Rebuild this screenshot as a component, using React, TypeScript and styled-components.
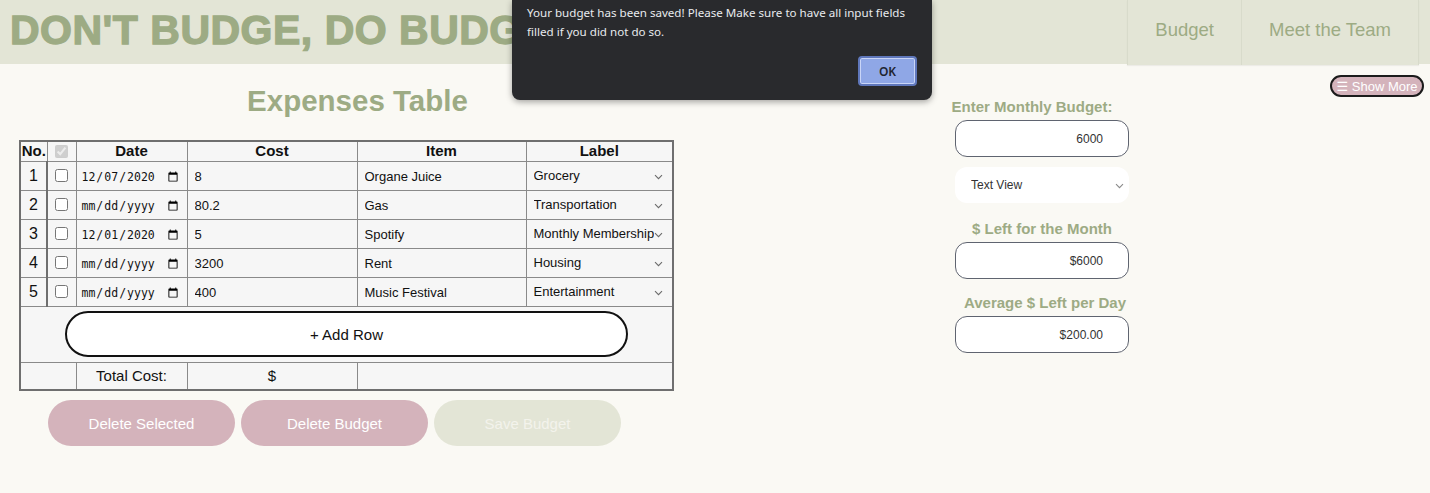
import React from "react";
import styled, { createGlobalStyle } from "styled-components";

const GlobalStyle = createGlobalStyle`
  html, body { margin: 0; padding: 0; background: #faf9f4; }
  body {
    font-family: "Liberation Sans", Arial, sans-serif;
    width: 1430px;
    height: 493px;
    overflow: hidden;
  }
  * { box-sizing: border-box; }
`;

const GREEN = "#9dab84";
const PINK = "#d4b3bb";
const SAGE = "#e3e5d6";

const Page = styled.div`
  position: relative;
  width: 1430px;
  height: 493px;
  background: #faf9f4;
`;

const Header = styled.header`
  display: flex;
  height: 64px;
  background: ${SAGE};
  padding-right: 11px;
`;

const Title = styled.h1`
  flex: 1;
  margin: 0;
  padding-left: 10px;
  font: 700 41px "Liberation Sans", Arial, sans-serif;
  letter-spacing: 0.5px;
  line-height: 60px;
  color: ${GREEN};
  -webkit-text-stroke: 1.3px ${GREEN};
  white-space: nowrap;
  overflow: hidden;
`;

const Nav = styled.nav`
  display: flex;
  height: 65px;
  box-shadow: 0 1px 1px rgba(0, 0, 0, 0.05);
  border-right: 1px solid #d8dbcb;
`;

const NavItem = styled.a`
  display: flex;
  align-items: center;
  padding: 0 27px 5px;
  font-size: 18.5px;
  color: ${GREEN};
  text-decoration: none;
  border-left: 1px solid #d8dbcb;
  background: ${SAGE};
`;

const Dialog = styled.div`
  position: absolute;
  top: 0;
  left: 512px;
  width: 420px;
  height: 100px;
  background: #292a2d;
  border-radius: 0 0 8px 8px;
  box-shadow: 0 2px 6px rgba(0, 0, 0, 0.35);
  padding: 4px 15px 0 15px;
  display: flex;
  flex-direction: column;
`;

const DialogText = styled.p`
  margin: 0;
  font: 11.6px "Noto Sans", "Open Sans", sans-serif;
  line-height: 18.5px;
  color: #e8eaed;
`;

const DialogFooter = styled.div`
  display: flex;
  justify-content: flex-end;
  margin-top: 15px;
`;

const OkButton = styled.button`
  width: 59px;
  height: 30px;
  border-radius: 4px;
  background: #8fa7e6;
  border: 2px solid #5f77bb;
  box-shadow: inset 0 0 0 1px #c9d5f7;
  color: #1f2430;
  font: 600 12px "Noto Sans", "Open Sans", sans-serif;
  padding: 0;
`;

const Main = styled.main`
  display: flex;
  align-items: flex-start;
`;

const LeftCol = styled.section`
  width: 696px;
  padding-left: 19px;
  display: flex;
  flex-direction: column;
`;

const Heading = styled.h2`
  margin: 20px 0 0;
  text-align: center;
  font: 700 29.5px "Liberation Sans", Arial, sans-serif;
  line-height: 33px;
  color: ${GREEN};
`;

const Table = styled.table`
  margin-top: 23px;
  width: 653px;
  table-layout: fixed;
  border-collapse: collapse;
  border: 2px solid #6f6f6f;
  background: #f6f6f6;
  font-family: "Liberation Sans", Arial, sans-serif;
  color: #111;
`;

const HeadCell = styled.th`
  height: 20px;
  padding: 0;
  border: 1px solid #8a8a8a;
  font-size: 15px;
  font-weight: 700;
  text-align: center;
  line-height: 18px;
`;

const Cell = styled.td<{ $center?: boolean; $h?: number }>`
  height: ${(p) => p.$h ?? 29}px;
  padding: 0 4px;
  border: 1px solid #8a8a8a;
  font-size: ${(p) => (p.$center ? 16 : 15)}px;
  text-align: ${(p) => (p.$center ? "center" : "left")};
  vertical-align: middle;
`;

const NumCell = styled(Cell)`
  padding: 0;
  border-right: 2px solid #6f6f6f;
`;

const Check = styled.input.attrs({ type: "checkbox" })`
  display: block;
  margin: 0 auto;
  width: 13px;
  height: 13px;
`;

const DateInput = styled.input.attrs({ type: "date" })`
  width: 100%;
  border: none;
  background: transparent;
  padding: 0 2px 0 0;
  font: 11.5px "DejaVu Sans Mono", "Liberation Mono", monospace;
  color: #111;
  outline: none;
`;

const TextInput = styled.input`
  width: 100%;
  border: none;
  background: transparent;
  padding: 0 3px;
  font: 13px "Liberation Sans", Arial, sans-serif;
  color: #111;
  outline: none;
`;

const SelectWrap = styled.div`
  position: relative;
  display: flex;
  align-items: center;
`;

const Chevron = styled.svg`
  position: absolute;
  right: 5px;
  top: 50%;
  width: 9px;
  height: 6px;
  margin-top: -2px;
  pointer-events: none;
`;

const LabelSelect = styled.select`
  appearance: none;
  -webkit-appearance: none;
  width: 100%;
  border: none;
  background: transparent;
  font: 13px "Liberation Sans", Arial, sans-serif;
  color: #111;
  padding: 0 14px 0 3px;
  outline: none;
`;

const AddRowButton = styled.button`
  display: block;
  margin: 0 auto;
  width: 563px;
  height: 46px;
  border: 2px solid #111;
  border-radius: 23px;
  background: #fff;
  font: 15px "Liberation Sans", Arial, sans-serif;
  color: #111;
`;

const ActionRow = styled.div`
  display: flex;
  gap: 6px;
  margin-top: 9px;
  padding-left: 29px;
`;

const ActionButton = styled.button<{ $variant: "pink" | "sage" }>`
  width: 187px;
  height: 46px;
  border: none;
  border-radius: 23px;
  background: ${(p) => (p.$variant === "pink" ? PINK : SAGE)};
  color: ${(p) => (p.$variant === "pink" ? "#fff" : "#f3f3ec")};
  font: 15px "Liberation Sans", Arial, sans-serif;
`;

const Panel = styled.aside`
  width: 174px;
  margin-left: 259px;
  margin-top: 34px;
  display: flex;
  flex-direction: column;
`;

const PanelLabel = styled.label<{ $shift?: number; $top?: number }>`
  display: block;
  margin-top: ${(p) => p.$top ?? 0}px;
  margin-bottom: 5px;
  font: 700 15px "Liberation Sans", Arial, sans-serif;
  line-height: 17px;
  color: ${GREEN};
  text-align: center;
  white-space: nowrap;
  position: relative;
  left: ${(p) => p.$shift ?? 0}px;
`;

const ValueBox = styled.input`
  width: 174px;
  height: 37px;
  border: 1px solid #5f6470;
  border-radius: 12px;
  background: #fff;
  text-align: right;
  padding: 0 25px 0 10px;
  font: 12px "Liberation Sans", Arial, sans-serif;
  color: #333;
  outline: none;
`;

const ViewWrap = styled(SelectWrap)`
  margin-top: 10px;
`;

const ViewSelect = styled.select`
  appearance: none;
  -webkit-appearance: none;
  width: 174px;
  height: 36px;
  border: none;
  border-radius: 12px;
  background: #fff;
  padding: 0 16px 0 16px;
  font: 12px "Liberation Sans", Arial, sans-serif;
  color: #333;
  outline: none;
`;

const ShowMore = styled.button`
  margin: 11px 6px 0 auto;
  width: 94px;
  height: 22px;
  border: 2px solid #1b1b1b;
  border-radius: 12px;
  background: ${PINK};
  color: #fff;
  font: 13px "Liberation Sans", "DejaVu Sans", Arial, sans-serif;
  padding: 0;
  white-space: nowrap;
`;

const ChevronIcon = ({ color = "#6b6b6b" }: { color?: string }) => (
  <Chevron viewBox="0 0 9 6" aria-hidden="true">
    <path d="M1 1.2 L4.5 4.7 L8 1.2" fill="none" stroke={color} strokeWidth="1.1" />
  </Chevron>
);

type Row = { date: string; cost: string; item: string; label: string };

const rows: Row[] = [
  { date: "2020-12-07", cost: "8", item: "Organe Juice", label: "Grocery" },
  { date: "", cost: "80.2", item: "Gas", label: "Transportation" },
  { date: "2020-12-01", cost: "5", item: "Spotify", label: "Monthly Membership" },
  { date: "", cost: "3200", item: "Rent", label: "Housing" },
  { date: "", cost: "400", item: "Music Festival", label: "Entertainment" },
];

const labels = [
  "Grocery",
  "Transportation",
  "Monthly Membership",
  "Housing",
  "Entertainment",
];

export default function App() {
  return (
    <Page>
      <GlobalStyle />
      <Header>
        <Title>DON'T BUDGE, DO BUDGET</Title>
        <Nav>
          <NavItem href="#">Budget</NavItem>
          <NavItem href="#">Meet the Team</NavItem>
        </Nav>
      </Header>

      <Main>
        <LeftCol>
          <Heading>Expenses Table</Heading>
          <Table>
            <colgroup>
              <col style={{ width: 27 }} />
              <col style={{ width: 29 }} />
              <col style={{ width: 111 }} />
              <col style={{ width: 170 }} />
              <col style={{ width: 169 }} />
              <col style={{ width: 147 }} />
            </colgroup>
            <thead>
              <tr>
                <HeadCell>No.</HeadCell>
                <HeadCell>
                  <Check disabled defaultChecked />
                </HeadCell>
                <HeadCell>Date</HeadCell>
                <HeadCell>Cost</HeadCell>
                <HeadCell>Item</HeadCell>
                <HeadCell>Label</HeadCell>
              </tr>
            </thead>
            <tbody>
              {rows.map((r, i) => (
                <tr key={i}>
                  <NumCell $center>{i + 1}</NumCell>
                  <Cell $center>
                    <Check />
                  </Cell>
                  <Cell>
                    <DateInput defaultValue={r.date} />
                  </Cell>
                  <Cell>
                    <TextInput defaultValue={r.cost} />
                  </Cell>
                  <Cell>
                    <TextInput defaultValue={r.item} />
                  </Cell>
                  <Cell>
                    <SelectWrap>
                      <LabelSelect defaultValue={r.label}>
                        {labels.map((l) => (
                          <option key={l}>{l}</option>
                        ))}
                      </LabelSelect>
                      <ChevronIcon />
                    </SelectWrap>
                  </Cell>
                </tr>
              ))}
              <tr>
                <Cell colSpan={6} $h={56}>
                  <AddRowButton>+ Add Row</AddRowButton>
                </Cell>
              </tr>
              <tr>
                <Cell colSpan={2} $h={28} />
                <Cell $center $h={28} style={{ fontSize: 15 }}>
                  Total Cost:
                </Cell>
                <Cell $center $h={28} style={{ fontSize: 15 }}>
                  $
                </Cell>
                <Cell colSpan={2} $h={28} />
              </tr>
            </tbody>
          </Table>
          <ActionRow>
            <ActionButton $variant="pink">Delete Selected</ActionButton>
            <ActionButton $variant="pink">Delete Budget</ActionButton>
            <ActionButton $variant="sage">Save Budget</ActionButton>
          </ActionRow>
        </LeftCol>

        <Panel>
          <PanelLabel $shift={-10}>Enter Monthly Budget:</PanelLabel>
          <ValueBox defaultValue="6000" />
          <ViewWrap>
            <ViewSelect defaultValue="Text View">
              <option>Text View</option>
              <option>Chart View</option>
            </ViewSelect>
            <ChevronIcon color="#8a8a8a" />
          </ViewWrap>
          <PanelLabel $top={17}>$ Left for the Month</PanelLabel>
          <ValueBox readOnly value="$6000" />
          <PanelLabel $top={15} $shift={3}>
            Average $ Left per Day
          </PanelLabel>
          <ValueBox readOnly value="$200.00" />
        </Panel>

        <ShowMore>☰ Show More</ShowMore>
      </Main>

      <Dialog role="alertdialog">
        <DialogText>
          Your budget has been saved! Please Make sure to have all input fields
          filled if you did not do so.
        </DialogText>
        <DialogFooter>
          <OkButton>OK</OkButton>
        </DialogFooter>
      </Dialog>
    </Page>
  );
}
